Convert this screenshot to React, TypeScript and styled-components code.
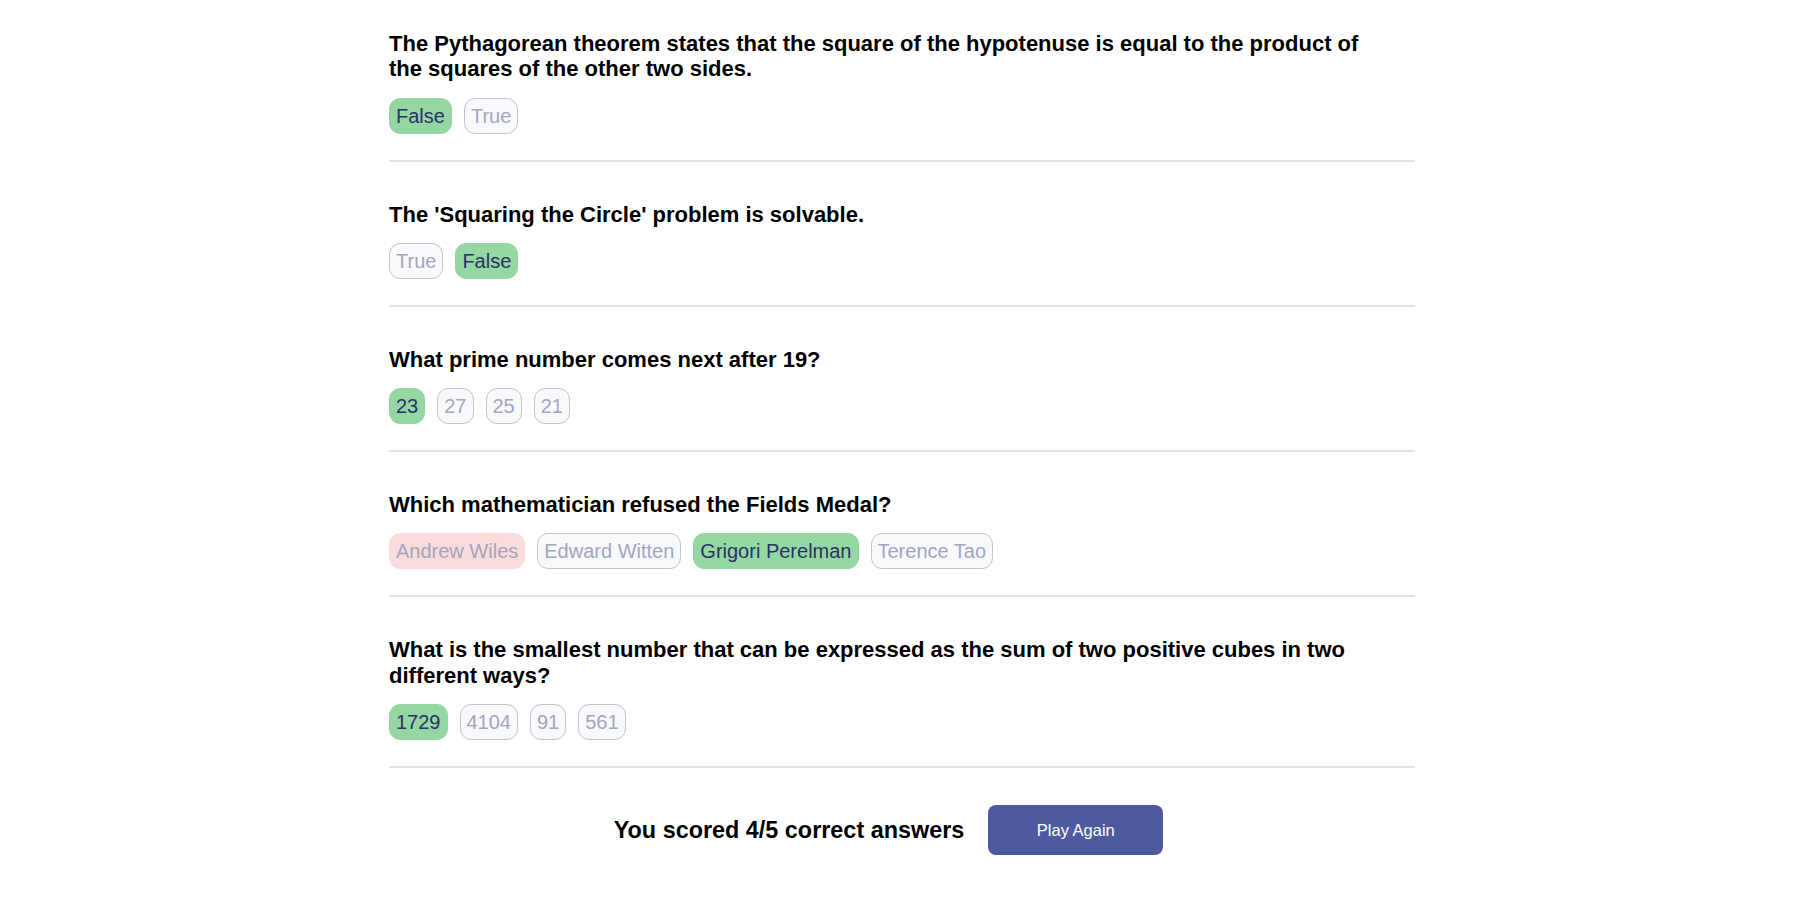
import React from "react";
import styled, { createGlobalStyle } from "styled-components";

const GlobalStyle = createGlobalStyle`
  html, body {
    margin: 0;
    padding: 0;
    background: #ffffff;
    font-family: "Liberation Sans", Arial, sans-serif;
  }
  * { box-sizing: border-box; }
`;

type Status = "correct" | "wrong" | "idle";

interface Question {
  text: string;
  options: { label: string; status: Status }[];
}

const questions: Question[] = [
  {
    text:
      "The Pythagorean theorem states that the square of the hypotenuse is equal to the product of the squares of the other two sides.",
    options: [
      { label: "False", status: "correct" },
      { label: "True", status: "idle" },
    ],
  },
  {
    text: "The 'Squaring the Circle' problem is solvable.",
    options: [
      { label: "True", status: "idle" },
      { label: "False", status: "correct" },
    ],
  },
  {
    text: "What prime number comes next after 19?",
    options: [
      { label: "23", status: "correct" },
      { label: "27", status: "idle" },
      { label: "25", status: "idle" },
      { label: "21", status: "idle" },
    ],
  },
  {
    text: "Which mathematician refused the Fields Medal?",
    options: [
      { label: "Andrew Wiles", status: "wrong" },
      { label: "Edward Witten", status: "idle" },
      { label: "Grigori Perelman", status: "correct" },
      { label: "Terence Tao", status: "idle" },
    ],
  },
  {
    text:
      "What is the smallest number that can be expressed as the sum of two positive cubes in two different ways?",
    options: [
      { label: "1729", status: "correct" },
      { label: "4104", status: "idle" },
      { label: "91", status: "idle" },
      { label: "561", status: "idle" },
    ],
  },
];

const Page = styled.main`
  width: 1026px;
  padding: 31px 13px 40px 0;
  margin: 0 auto;
  box-sizing: content-box;
`;

const Section = styled.section`
  padding: 40px 0 26px;
  border-bottom: 2px solid #e3e3e3;

  &:first-child {
    padding-top: 0;
  }
`;

const QuestionText = styled.h2`
  margin: 0 0 16px;
  max-width: 990px;
  font-size: 22px;
  line-height: 25.3px;
  font-weight: 700;
  color: #000000;
`;

const Options = styled.div`
  display: flex;
  flex-wrap: wrap;
  gap: 12px;
`;

const Option = styled.button<{ $status: Status }>`
  height: 36px;
  padding: 0 6px;
  border-radius: 11px;
  font-family: "Liberation Sans", Arial, sans-serif;
  font-size: 20px;
  line-height: 1;
  cursor: pointer;
  border: 1px solid
    ${(p) =>
      p.$status === "correct"
        ? "#94d7a2"
        : p.$status === "wrong"
        ? "#fbdcdc"
        : "#c4c5cb"};
  background: ${(p) =>
    p.$status === "correct"
      ? "#94d7a2"
      : p.$status === "wrong"
      ? "#fbdcdc"
      : "#f8f9fc"};
  color: ${(p) => (p.$status === "correct" ? "#293264" : "#a2a5c0")};
`;

const Footer = styled.footer`
  display: flex;
  align-items: center;
  justify-content: center;
  gap: 24px;
  padding: 37px 27px 0 0;
`;

const Score = styled.p`
  margin: 0;
  font-size: 23.4px;
  font-weight: 700;
  color: #000000;
`;

const PlayButton = styled.button`
  width: 175px;
  height: 50px;
  border: none;
  border-radius: 8px;
  background: #4d5b9e;
  color: #ffffff;
  font-family: "Liberation Sans", Arial, sans-serif;
  font-size: 16.5px;
  cursor: pointer;
`;

export default function App() {
  return (
    <>
      <GlobalStyle />
      <Page>
        {questions.map((q) => (
          <Section key={q.text}>
            <QuestionText>{q.text}</QuestionText>
            <Options>
              {q.options.map((o) => (
                <Option key={o.label} $status={o.status}>
                  {o.label}
                </Option>
              ))}
            </Options>
          </Section>
        ))}
        <Footer>
          <Score>You scored 4/5 correct answers</Score>
          <PlayButton>Play Again</PlayButton>
        </Footer>
      </Page>
    </>
  );
}
